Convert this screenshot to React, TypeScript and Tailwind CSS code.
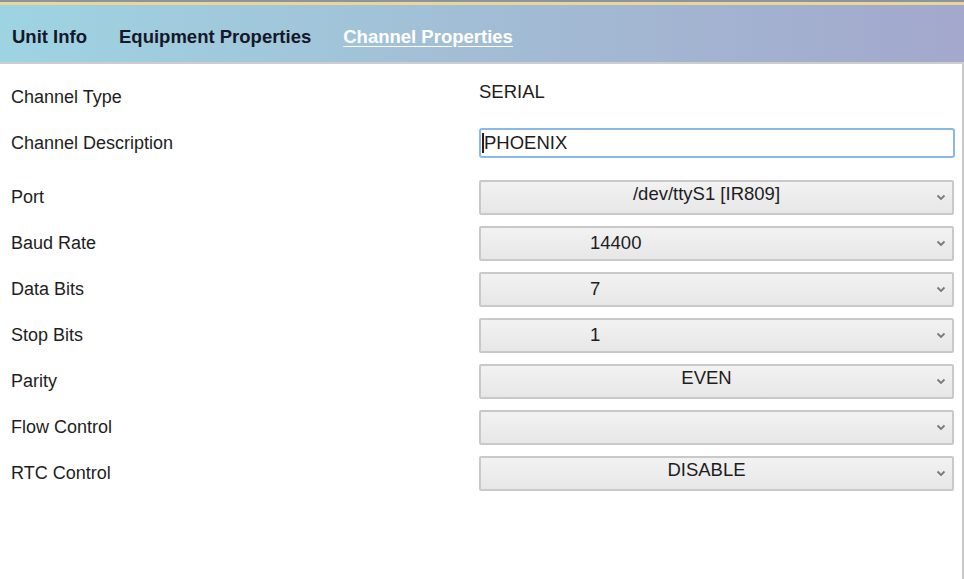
import React from "react";

function Chevron() {
  return (
    <svg width="10" height="7" viewBox="0 0 10 7" className="shrink-0">
      <polyline points="1.5,1.5 5,5 8.5,1.5" fill="none" stroke="#7a7a7a" strokeWidth="1.8" />
    </svg>
  );
}

function Select({ value, align }: { value: string; align: "center" | "left" }) {
  return (
    <div className="flex h-[35px] w-[475px] items-center rounded-[2px] border-2 border-[#c9c9c9] bg-gradient-to-b from-[#f2f2f2] to-[#e7e7e7]">
      <div
        className={
          align === "center"
            ? "mb-[5px] flex-1 pr-[4px] text-center text-[18.5px] leading-none text-[#1d1d22]"
            : "flex-1 pl-[109px] text-left text-[18.5px] leading-none text-[#1d1d22]"
        }
      >
        {value}
      </div>
      <div className="mr-[6px] flex items-center">
        <Chevron />
      </div>
    </div>
  );
}

const selects: { label: string; value: string; align: "center" | "left" }[] = [
  { label: "Port", value: "/dev/ttyS1 [IR809]", align: "center" },
  { label: "Baud Rate", value: "14400", align: "left" },
  { label: "Data Bits", value: "7", align: "left" },
  { label: "Stop Bits", value: "1", align: "left" },
  { label: "Parity", value: "EVEN", align: "center" },
  { label: "Flow Control", value: "", align: "center" },
  { label: "RTC Control", value: "DISABLE", align: "center" },
];

export default function App() {
  return (
    <div className="flex h-[579px] w-[964px] flex-col overflow-hidden bg-white font-['Liberation_Sans',Arial,sans-serif]">
      <div className="h-[2px] bg-[#8f949c]" />
      <div className="h-[3px] bg-[#e9d69e]" />
      <div className="flex h-[59px] items-center gap-[32px] border-b-2 border-[#cdcdcd] bg-gradient-to-r from-[#9ed4e2] via-[#a2bdd5] to-[#a3a8cc] px-[12px] pt-[6px]">
        <span className="text-[18.5px] font-bold text-[#15172a]">Unit Info</span>
        <span className="text-[18.5px] font-bold text-[#15172a]">Equipment Properties</span>
        <span className="text-[18.5px] font-bold text-white underline underline-offset-[3px]">Channel Properties</span>
      </div>
      <div className="flex flex-1 flex-col border-r-2 border-[#c9c9c9] pt-[10px] text-[18px] text-[#1d1d22]">
        <div className="flex h-[46px] items-center">
          <div className="w-[479px] pl-[11px]">Channel Type</div>
          <div className="mb-[10px] text-[18.5px]">SERIAL</div>
        </div>
        <div className="flex h-[46px] items-center">
          <div className="w-[479px] pl-[11px]">Channel Description</div>
          <div className="flex h-[30px] w-[476px] items-center rounded-[3px] border-2 border-[#8ab9e6] bg-white pl-[1px]">
            <span className="h-[20px] w-[2px] bg-[#3a1616]" />
            <span className="text-[18.5px] leading-none">PHOENIX</span>
          </div>
        </div>
        <div className="mt-[8px] flex flex-col">
          {selects.map((s) => (
            <div key={s.label} className="flex h-[46px] items-center">
              <div className="w-[479px] pl-[11px]">{s.label}</div>
              <Select value={s.value} align={s.align} />
            </div>
          ))}
        </div>
      </div>
    </div>
  );
}
